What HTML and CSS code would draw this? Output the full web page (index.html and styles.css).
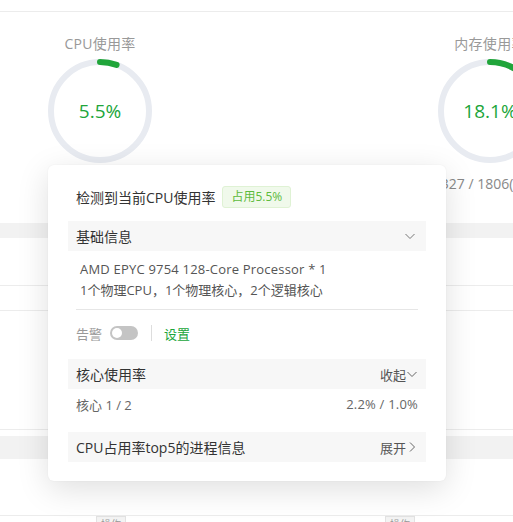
FILE: index.html
```html
<!DOCTYPE html>
<html lang="zh-CN">
<head>
<meta charset="utf-8">
<link rel="stylesheet" href="styles.css">
</head>
<body>
<div class="page">
  <div class="topbar"></div>
  <div class="gauges">
    <div class="gauge">
      <div class="g-title">CPU使用率</div>
      <div class="ring">
        <svg width="104" height="104" viewBox="0 0 104 104">
          <circle cx="52" cy="52" r="49" fill="none" stroke="#e8ebf1" stroke-width="6"/>
          <circle cx="52" cy="52" r="49" fill="none" stroke="#20a53a" stroke-width="6" stroke-linecap="round" stroke-dasharray="16.9 400" transform="rotate(-90 52 52)"/>
        </svg>
        <span class="g-val">5.5%</span>
      </div>
    </div>
    <div class="gauge">
      <div class="g-title">内存使用率</div>
      <div class="ring">
        <svg width="104" height="104" viewBox="0 0 104 104">
          <circle cx="52" cy="52" r="49" fill="none" stroke="#e8ebf1" stroke-width="6"/>
          <circle cx="52" cy="52" r="49" fill="none" stroke="#20a53a" stroke-width="6" stroke-linecap="round" stroke-dasharray="55.7 400" transform="rotate(-90 52 52)"/>
        </svg>
        <span class="g-val">18.1%</span>
      </div>
      <div class="g-sub">327 / 1806(MB)</div>
    </div>
  </div>
  <div class="band"></div>
  <div class="blank b1"></div>
  <div class="row r1"></div>
  <div class="blank b2"></div>
  <div class="blank b3"></div>
  <div class="band band2"></div>
  <div class="blank b4"></div>
  <div class="tags">
    <span class="tag t1">操作</span>
    <span class="tag t2">操作</span>
  </div>

  <div class="popover">
    <div class="pop-head">
      <span>检测到当前CPU使用率</span>
      <span class="badge">占用5.5%</span>
    </div>
    <div class="sec-head">
      <span>基础信息</span>
      <svg class="chev" width="12" height="12" viewBox="0 0 12 12"><path d="M1.5 4 L6 8.5 L10.5 4" fill="none" stroke="#777" stroke-width="1"/></svg>
    </div>
    <div class="info">
      <div class="en">AMD EPYC 9754 128-Core Processor * 1</div>
      <div>1个物理CPU，1个物理核心，2个逻辑核心</div>
    </div>
    <div class="alert">
      <span class="muted">告警</span>
      <span class="switch"><span class="knob"></span></span>
      <span class="divider"></span>
      <span class="link">设置</span>
    </div>
    <div class="sec-head">
      <span>核心使用率</span>
      <span class="act">收起<svg width="12" height="12" viewBox="0 0 12 12"><path d="M1.5 4 L6 8.5 L10.5 4" fill="none" stroke="#666" stroke-width="1"/></svg></span>
    </div>
    <div class="core">
      <span>核心 1 / 2</span>
      <span class="en">2.2% / 1.0%</span>
    </div>
    <div class="sec-head last">
      <span>CPU占用率top5的进程信息</span>
      <span class="act">展开<svg width="12" height="12" viewBox="0 0 12 12"><path d="M4 1.5 L8.5 6 L4 10.5" fill="none" stroke="#666" stroke-width="1"/></svg></span>
    </div>
  </div>
</div>
</body>
</html>
```

FILE: styles.css
```css
html, body {
  margin: 0;
  padding: 0;
  background: #fff;
}
body {
  font-family: "Open Sans", "Noto Sans CJK SC", sans-serif;
  width: 513px;
  height: 522px;
  overflow: hidden;
}
.page {
  position: relative;
  width: 513px;
  height: 522px;
  overflow: hidden;
}
.topbar {
  height: 11px;
  border-bottom: 1px solid #ececec;
}
.gauges {
  display: flex;
  gap: 286px;
  padding-left: 48px;
  height: 211px;
}
.gauge {
  width: 104px;
  display: flex;
  flex-direction: column;
  align-items: center;
  flex-shrink: 0;
}
.g-title {
  margin-top: 22px;
  font-size: 14px;
  line-height: 20px;
  color: #999;
  white-space: nowrap;
  letter-spacing: 0.3px;
}
.ring {
  position: relative;
  width: 104px;
  height: 104px;
  margin-top: 5px;
}
.ring svg {
  display: block;
}
.g-val {
  position: absolute;
  inset: 0;
  display: flex;
  align-items: center;
  justify-content: center;
  font-size: 19px;
  color: #20a53a;
}
.g-sub {
  margin-top: 11px;
  font-size: 14px;
  color: #888;
  white-space: nowrap;
}
.band {
  height: 15px;
  background: #f2f2f2;
}
.b1 {
  height: 47px;
  border-bottom: 1px solid #ececec;
}
.r1 {
  height: 24px;
  border-bottom: 1px solid #ececec;
}
.b2 {
  height: 118px;
  border-bottom: 1px solid #ececec;
}
.b3 {
  height: 6px;
}
.band2 {
  height: 23px;
}
.b4 {
  height: 56px;
  border-bottom: 1px solid #ececec;
}
.tags {
  position: relative;
  height: 10px;
}
.tag {
  position: absolute;
  top: 0;
  height: 14px;
  padding: 0 4px;
  font-size: 10px;
  line-height: 14px;
  color: #999;
  background: #f3f3f3;
  border: 1px solid #e2e2e2;
}
.t1 { left: 96px; }
.t2 { left: 385px; }

.popover {
  position: absolute;
  left: 48px;
  top: 165px;
  width: 358px;
  padding: 20px 20px 19px;
  background: #fff;
  border-radius: 6px;
  box-shadow: 0 8px 32px rgba(0, 0, 0, 0.13), 0 0 2px rgba(0, 0, 0, 0.06);
}
.pop-head {
  display: flex;
  align-items: center;
  gap: 7px;
  height: 24px;
  padding-left: 8px;
  margin-bottom: 12px;
  font-size: 14px;
  color: #333;
}
.badge {
  height: 20px;
  line-height: 20px;
  padding: 0 8px;
  font-size: 12px;
  color: #5dbb3d;
  background: #f0f9eb;
  border: 1px solid #dff2d4;
  border-radius: 3px;
}
.sec-head {
  display: flex;
  align-items: center;
  justify-content: space-between;
  height: 30px;
  padding: 0 8px;
  background: #f7f7f7;
  font-size: 14px;
  color: #333;
}
.chev {
  margin-right: 2px;
}
.act {
  display: flex;
  align-items: center;
  font-size: 13px;
  color: #555;
}
.info {
  margin: 0 8px;
  padding: 8px 4px 8px;
  font-size: 13px;
  line-height: 21px;
  color: #555;
  border-bottom: 1px solid #e6e6e6;
}
.en {
  letter-spacing: 0.2px;
}
.alert {
  display: flex;
  align-items: center;
  height: 28px;
  margin-top: 9px;
  margin-bottom: 12px;
  padding-left: 8px;
  font-size: 13px;
}
.muted {
  color: #999;
}
.switch {
  position: relative;
  width: 28px;
  height: 14px;
  margin-left: 8px;
  border-radius: 7px;
  background: #c4c4c4;
}
.knob {
  position: absolute;
  left: 2px;
  top: 2px;
  width: 10px;
  height: 10px;
  border-radius: 50%;
  background: #fff;
}
.divider {
  width: 1px;
  height: 16px;
  margin: 0 12px 0 13px;
  background: #ddd;
}
.link {
  color: #20a53a;
}
.core {
  display: flex;
  align-items: center;
  justify-content: space-between;
  height: 30px;
  padding: 0 8px;
  margin-bottom: 13px;
  font-size: 13px;
  color: #666;
}
```
